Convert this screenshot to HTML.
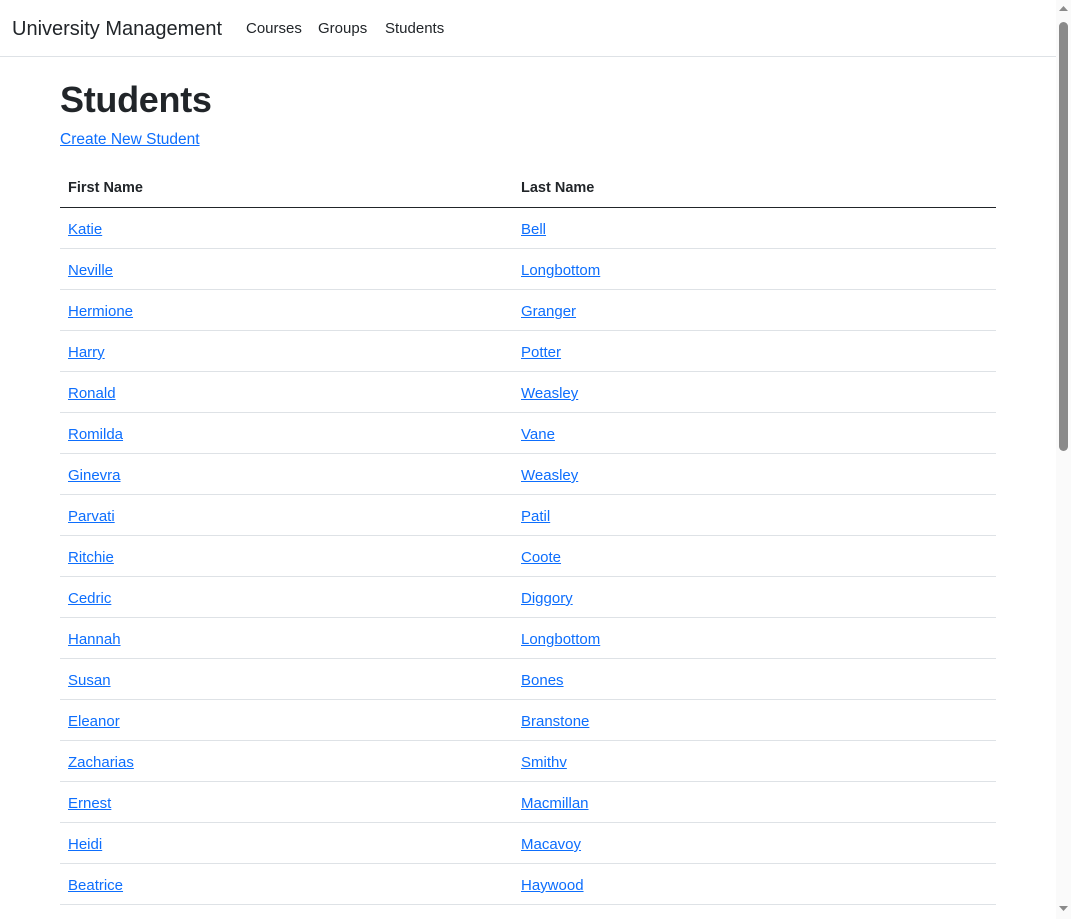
<!DOCTYPE html>
<html><head><meta charset="utf-8"><style>
*{margin:0;padding:0;box-sizing:border-box}
body{width:1071px;height:919px;overflow:hidden;background:#fff;font-family:"Liberation Sans",sans-serif;color:#212529;position:relative}
.nav{position:absolute;left:0;top:0;width:1056px;height:57px;border-bottom:1px solid #dee2e6}
.brand{position:absolute;left:12px;top:18px;font-size:20px;color:#212529}
.nl{position:absolute;top:20px;font-size:15px;color:#212529}
h1{position:absolute;left:60px;top:79px;font-size:36px;font-weight:bold;letter-spacing:-0.3px}
a{color:#0d6efd;text-decoration:underline}
.create{position:absolute;left:60px;top:131px;font-size:15.5px}
.th{position:absolute;top:180px;font-size:14.5px;font-weight:bold}
.hline{position:absolute;left:60px;top:207px;width:936px;height:1px;background:#212529}
.row{position:absolute;left:60px;width:936px;height:41px;border-bottom:1px solid #dee2e6;font-size:15px}
.row a{position:absolute;top:13px}
.sb{position:absolute;left:1056px;top:0;width:15px;height:919px;background:#fafafa}
.thumb{position:absolute;left:1059px;top:22px;width:9px;height:429px;background:#8a8a8a;border-radius:5px}
</style></head><body>
<div class="nav">
<span class="brand">University Management</span>
<span class="nl" style="left:246px">Courses</span>
<span class="nl" style="left:318px">Groups</span>
<span class="nl" style="left:385px">Students</span>
</div>
<h1>Students</h1>
<a class="create" href="#">Create New Student</a>
<span class="th" style="left:68px">First Name</span>
<span class="th" style="left:521px">Last Name</span>
<div class="hline"></div>
<div class="row" style="top:208px"><a href="#" style="left:8px">Katie</a><a href="#" style="left:461px">Bell</a></div>
<div class="row" style="top:249px"><a href="#" style="left:8px">Neville</a><a href="#" style="left:461px">Longbottom</a></div>
<div class="row" style="top:290px"><a href="#" style="left:8px">Hermione</a><a href="#" style="left:461px">Granger</a></div>
<div class="row" style="top:331px"><a href="#" style="left:8px">Harry</a><a href="#" style="left:461px">Potter</a></div>
<div class="row" style="top:372px"><a href="#" style="left:8px">Ronald</a><a href="#" style="left:461px">Weasley</a></div>
<div class="row" style="top:413px"><a href="#" style="left:8px">Romilda</a><a href="#" style="left:461px">Vane</a></div>
<div class="row" style="top:454px"><a href="#" style="left:8px">Ginevra</a><a href="#" style="left:461px">Weasley</a></div>
<div class="row" style="top:495px"><a href="#" style="left:8px">Parvati</a><a href="#" style="left:461px">Patil</a></div>
<div class="row" style="top:536px"><a href="#" style="left:8px">Ritchie</a><a href="#" style="left:461px">Coote</a></div>
<div class="row" style="top:577px"><a href="#" style="left:8px">Cedric</a><a href="#" style="left:461px">Diggory</a></div>
<div class="row" style="top:618px"><a href="#" style="left:8px">Hannah</a><a href="#" style="left:461px">Longbottom</a></div>
<div class="row" style="top:659px"><a href="#" style="left:8px">Susan</a><a href="#" style="left:461px">Bones</a></div>
<div class="row" style="top:700px"><a href="#" style="left:8px">Eleanor</a><a href="#" style="left:461px">Branstone</a></div>
<div class="row" style="top:741px"><a href="#" style="left:8px">Zacharias</a><a href="#" style="left:461px">Smithv</a></div>
<div class="row" style="top:782px"><a href="#" style="left:8px">Ernest</a><a href="#" style="left:461px">Macmillan</a></div>
<div class="row" style="top:823px"><a href="#" style="left:8px">Heidi</a><a href="#" style="left:461px">Macavoy</a></div>
<div class="row" style="top:864px"><a href="#" style="left:8px">Beatrice</a><a href="#" style="left:461px">Haywood</a></div>
<div class="sb"></div>
<div class="thumb"></div>
<svg style="position:absolute;left:1059px;top:6px" width="9" height="6"><path d="M0 5 L4.5 0 L9 5Z" fill="#8a8a8a"/></svg>
<svg style="position:absolute;left:1059px;top:906px" width="9" height="6"><path d="M0 0 L4.5 5 L9 0Z" fill="#8a8a8a"/></svg>
</body></html>
